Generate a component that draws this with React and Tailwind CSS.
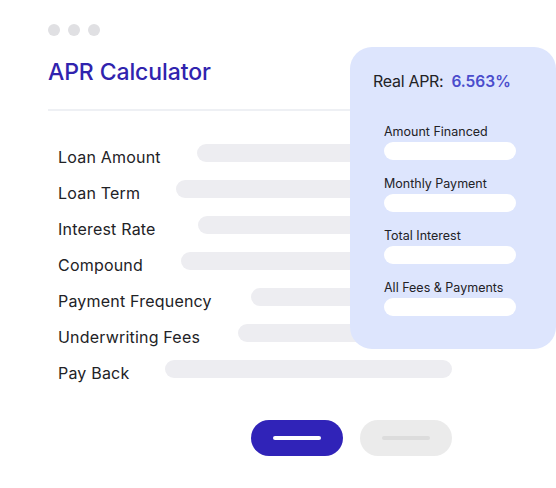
const rows = [
  { label: 'Loan Amount', bar: 'w-[255px]' },
  { label: 'Loan Term', bar: 'w-[276px]' },
  { label: 'Interest Rate', bar: 'w-[254px]' },
  { label: 'Compound', bar: 'w-[271px]' },
  { label: 'Payment Frequency', bar: 'w-[201px]' },
  { label: 'Underwriting Fees', bar: 'w-[214px]' },
  { label: 'Pay Back', bar: 'w-[287px]' },
]

const results = ['Amount Financed', 'Monthly Payment', 'Total Interest', 'All Fees & Payments']

const App = () => {
  return (
    <div className="relative w-[556px] h-[488px] bg-white overflow-hidden" style={{ fontFamily: 'Inter, "Liberation Sans", sans-serif' }}>
      {/* window dots */}
      <div className="flex gap-2 pl-12 pt-6">
        <span className="w-3 h-3 rounded-full bg-[#e0e0e3]" />
        <span className="w-3 h-3 rounded-full bg-[#e0e0e3]" />
        <span className="w-3 h-3 rounded-full bg-[#e0e0e3]" />
      </div>

      {/* title */}
      <h1 className="ml-12 mt-[22px] text-[23px] leading-7 font-medium tracking-[-0.1px] text-[#3023ae]">APR Calculator</h1>
      <div className="ml-12 mt-[23px] w-[340px] h-[2px] bg-[#eef0f4]" />

      {/* form rows */}
      <div className="ml-[58px] mt-7 w-[394px]">
        {rows.map(row => (
          <div key={row.label} className="flex h-9 items-center">
            <span className="text-base tracking-[0.2px] text-[#222226]">{row.label}</span>
            <span className={`ml-auto self-start mt-[5px] h-[18px] rounded-full bg-[#ededf1] ${row.bar}`} />
          </div>
        ))}

        {/* buttons */}
        <div className="flex justify-end gap-[17px] mt-[29px]">
          <button className="w-[92px] h-9 rounded-full bg-[#3023b8] flex items-center justify-center">
            <span className="w-12 h-1 rounded-full bg-white" />
          </button>
          <button className="w-[92px] h-9 rounded-full bg-[#ebebeb] flex items-center justify-center">
            <span className="w-12 h-1 rounded-full bg-[#dcdcdc]" />
          </button>
        </div>
      </div>

      {/* result card */}
      <div className="absolute left-[350px] top-[47px] w-[206px] h-[302px] rounded-[22px] bg-[#dde5fd] pl-[23px] pt-[22px]">
        <div className="flex items-baseline gap-2">
          <span className="text-base text-[#222226] tracking-[-0.3px]">Real APR:</span>
          <span className="text-[15.5px] font-semibold text-[#4a4ccc]">6.563%</span>
        </div>
        <div className="mt-[31px] pl-[11px] flex flex-col gap-4">
          {results.map(r => (
            <div key={r}>
              <div className="text-[12.5px] leading-4 text-[#222226]">{r}</div>
              <div className="mt-[2px] w-[132px] h-[18px] rounded-full bg-white" />
            </div>
          ))}
        </div>
      </div>
    </div>
  )
}

export default App
